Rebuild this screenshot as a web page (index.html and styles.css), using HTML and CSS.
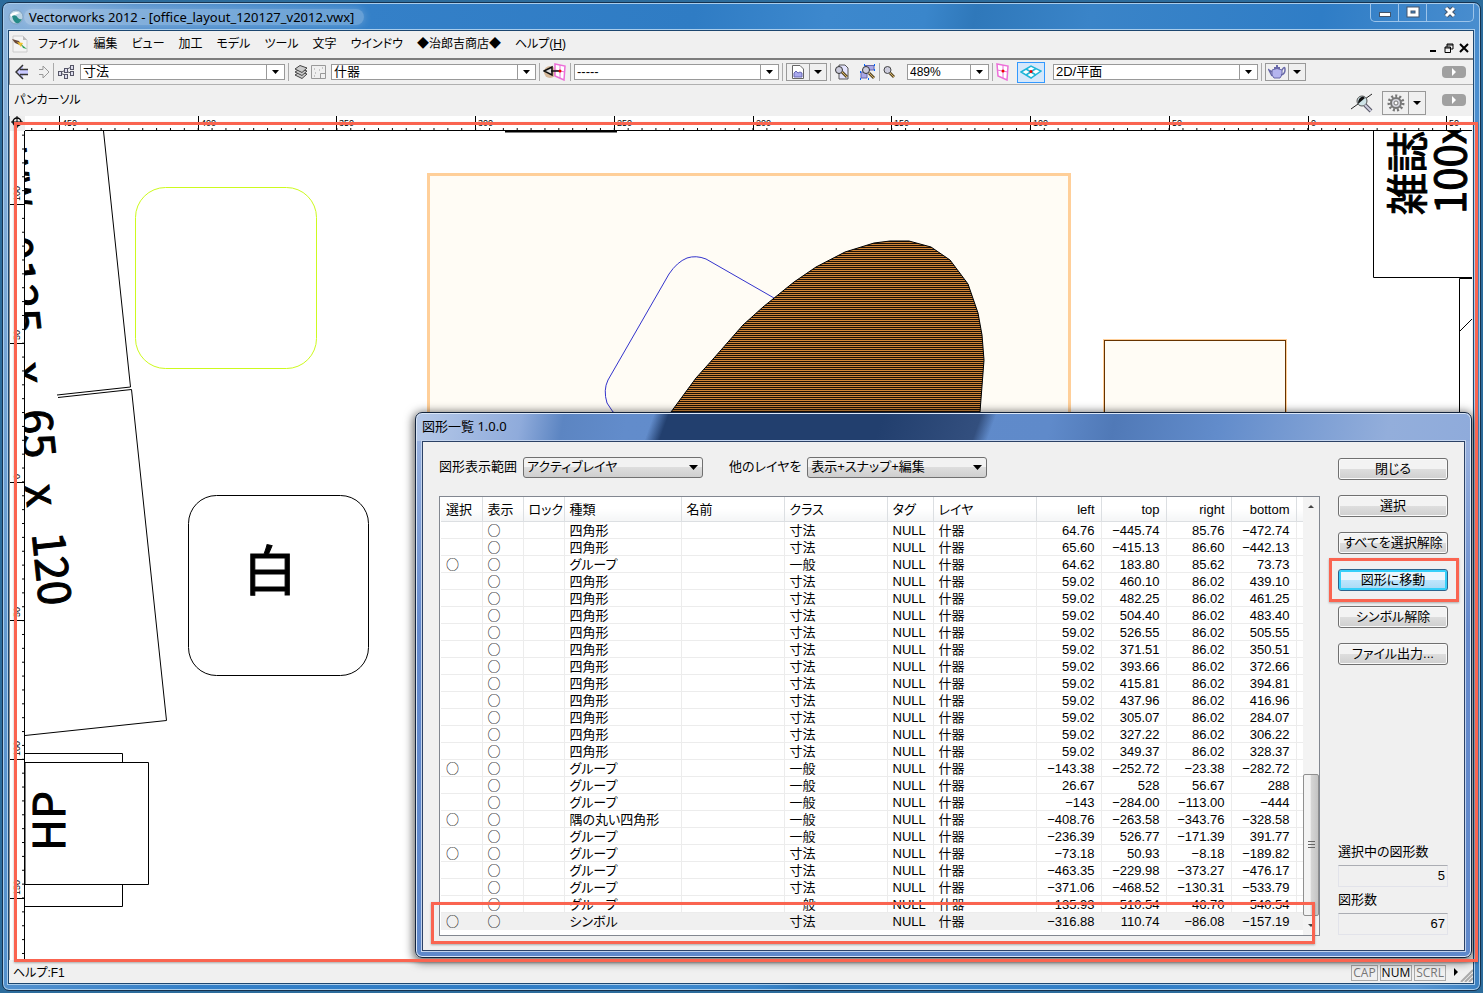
FILE: index.html
```html
<!DOCTYPE html>
<html lang="ja">
<head>
  <meta charset="UTF-8" />
  <meta name="viewport" content="width=device-width, initial-scale=1.0" />
  <title>Vectorworks 2012 - [office_layout_120127_v2012.vwx]</title>
  <link rel="stylesheet" href="styles.css">
</head>
<body>
  <div class="window">
    <header class="titlebar">
      <svg class="app-icon" width="16" height="16" viewBox="0 0 16 16">
        <circle cx="8" cy="8" r="7" fill="#b9d3e4" stroke="#7d9fc0"/>
        <path d="M2 6 Q6 1 12 4 Q7 5 5 9 Z" fill="#fff"/>
        <path d="M4 7 Q8 5 10 9 Q12 11 14 10 Q12 15 8 14 Q5 12 4 7Z" fill="#258a86"/>
      </svg>
      <h1>Vectorworks 2012 - [office_layout_120127_v2012.vwx]</h1>
      <div class="window-buttons">
        <button type="button" aria-label="最小化"><svg width="14" height="12"><rect x="1.5" y="6.5" width="11" height="4" fill="#fff" stroke="#44556b"/></svg></button>
        <button type="button" aria-label="最大化"><svg width="14" height="12"><rect x="3" y="3" width="8" height="6" fill="none" stroke="#44556b" stroke-width="5"/><rect x="3" y="3" width="8" height="6" fill="none" stroke="#fff" stroke-width="3"/></svg></button>
        <button type="button" class="wide" aria-label="閉じる"><svg width="14" height="12"><path d="M3 2L11 10M11 2L3 10" stroke="#44556b" stroke-width="5"/><path d="M3 2L11 10M11 2L3 10" stroke="#fff" stroke-width="3"/></svg></button>
      </div>
    </header>

    <div class="client">
      <nav class="menubar">
        <svg width="17" height="18" viewBox="0 0 17 18">
          <path d="M1 1H11L15 5V17H1Z" fill="#f4f4f4" stroke="#ccc"/>
          <path d="M11 1V5H15" fill="#bbb"/>
          <path d="M0 4L7 6L10 11L3 8Z" fill="#6a4a3a"/>
          <path d="M5 7L11 8L9 12Z" fill="#f4c430"/>
          <path d="M9 9L15 14L11 13Z" fill="#35a35a"/>
        </svg>
        <a href="#">ファイル</a>
        <a href="#">編集</a>
        <a href="#">ビュー</a>
        <a href="#">加工</a>
        <a href="#">モデル</a>
        <a href="#">ツール</a>
        <a href="#">文字</a>
        <a href="#">ウインドウ</a>
        <a href="#">◆治郎吉商店◆</a>
        <a href="#">ヘルプ(<u>H</u>)</a>
        <div class="doc-buttons">
          <button type="button" aria-label="文書を最小化"><svg width="10" height="10"><path d="M1 8H7" stroke="#000" stroke-width="2"/></svg></button>
          <button type="button" aria-label="元に戻す"><svg width="10" height="10"><path d="M3 4V1H9V6H7M3 2H9" fill="none" stroke="#000"/><path d="M1 4H6.5V9.5H1ZM1 5H7" fill="none" stroke="#000"/></svg></button>
          <button type="button" aria-label="文書を閉じる"><svg width="10" height="10"><path d="M1 1L9 9M9 1L1 9" stroke="#000" stroke-width="2"/></svg></button>
        </div>
      </nav>

      <div class="toolbar">
        <button type="button" class="tool" aria-label="戻る"><svg width="14" height="16"><path d="M1 8L8 1V5H13V11H8V15Z" fill="#c9c9ff" stroke="none"/><path d="M8 1L1 8L8 15M5 5.5H13M5 10.5H13" fill="none" stroke="#333" stroke-width="1.5"/></svg></button>
        <button type="button" class="tool" aria-label="進む"><svg width="12" height="16"><path d="M5 2L11 8L5 14V10.5H1M5 2V5.5H1" fill="none" stroke="#999"/></svg></button>
        <span class="sep"></span>
        <button type="button" class="tool" aria-label="クラス"><svg width="18" height="16" fill="none" stroke="#556"><path d="M3 9L14 3M8 7L14 9M3 9L8 11"/><g fill="#dde"><rect x="1.5" y="7.5" width="3" height="4"/><rect x="7.5" y="4.5" width="3" height="4"/><rect x="13.5" y="1.5" width="3" height="4"/><rect x="13.5" y="7.5" width="3" height="4"/><rect x="7.5" y="10.5" width="3" height="4"/></g></svg></button>
        <select class="combo wide" aria-label="アクティブクラス"><option>寸法</option></select>
        <span class="sep"></span>
        <button type="button" class="tool layers" aria-label="レイヤ"><svg width="14" height="16" fill="#ccc" stroke="#444"><path d="M1 11L6 8L13 10L8 14.5Z"/><path d="M1 8L6 5L13 7L8 11.5Z"/><path d="M1 5L6 1.5L13 4L8 8.5Z"/></svg></button>
        <button type="button" class="tool" aria-label="シート"><svg width="15" height="14" fill="none" stroke="#999"><path d="M.5 .5H14.5V13.5H.5Z"/><path d="M14 8.5H9.5V13"/><path d="M3 4H5M8 5H10M4 8H6M11 3H12M3 11H5" stroke-dasharray="1 1"/></svg></button>
        <select class="combo wide" aria-label="アクティブレイヤ"><option>什器</option></select>
        <span class="sep"></span>
        <button type="button" class="tool" aria-label="ビュー"><svg width="24" height="18"><ellipse cx="7" cy="9" rx="6" ry="6" fill="#d6b99a"/><path d="M12 1L22 3L21 17L12 13Z" fill="#fff" stroke="#ec6fd8" stroke-width="1.5"/><path d="M17 2V15M12 7L22 9" stroke="#ec6fd8"/><path d="M1 8L9 4V12Z" fill="#ddd" stroke="#111" stroke-width="1.5"/><path d="M8 8H16" stroke="#111" stroke-width="1.5"/><circle cx="17" cy="8" r="1.5" fill="#e00"/></svg></button>
        <span class="sep"></span>
        <select class="combo wide" aria-label="登録画面"><option>-----</option></select>
        <span class="sep"></span>
        <div class="pair">
          <button type="button" aria-label="シート枠"><svg width="12" height="14"><path d="M.5 .5H8L11.5 4V13.5H.5Z" fill="#fff" stroke="#666"/><path d="M2 12V8L4 6L6 8L8 7L10 8V12Z" fill="#a9a9ee" stroke="#6767b0"/></svg></button>
          <button type="button" class="drop" aria-label="シート枠メニュー"></button>
        </div>
        <span class="sep"></span>
        <button type="button" class="tool" aria-label="用紙全体"><svg width="16" height="16"><path d="M5 1H11L14 4V15H5Z" fill="#e4e4ff" stroke="#555"/><circle cx="5" cy="6" r="3.5" fill="#ccd" stroke="#333"/><path d="M8 8L13 13" stroke="#5b4b28" stroke-width="3"/><path d="M8 8L13 13" stroke="#d8b465"/></svg></button>
        <button type="button" class="tool" aria-label="図形全体"><svg width="17" height="16"><path d="M6 1.5H15V6H6ZM2 8H8V14H2Z" fill="#a9a9e8" stroke="#66a"/><path d="M5 1H6M15 1H16M15 6H16M1 8H2M1 15H2M9 15H10" stroke="#06f" stroke-width="2"/><circle cx="7" cy="6" r="3.5" fill="#ccd" stroke="#333"/><path d="M10 9L15 14" stroke="#5b4b28" stroke-width="3"/><path d="M10 9L15 14" stroke="#d8b465"/></svg></button>
        <span class="sep"></span>
        <button type="button" class="tool" aria-label="ズーム"><svg width="12" height="14"><circle cx="4.5" cy="5" r="3.5" fill="#ccd" stroke="#444"/><path d="M7 8L11 12" stroke="#5b4b28" stroke-width="3"/><path d="M7 8L11 12" stroke="#d8b465"/></svg></button>
        <select class="combo zoom" aria-label="表示倍率"><option>489%</option></select>
        <span class="sep"></span>
        <button type="button" class="tool" aria-label="透視"><svg width="14" height="18"><path d="M1 1L12 3L11 17L2 13Z" fill="#fff" stroke="#ec6fd8" stroke-width="1.5"/><path d="M7 2V15M1 7L12 9" stroke="#ec6fd8"/><circle cx="7" cy="8" r="1.5" fill="#e00"/></svg></button>
        <button type="button" class="tool active" aria-label="平面"><svg width="22" height="14" fill="#fff" stroke="#1fb5d8" stroke-width="1.5"><path d="M1 7L11 1L21 6L11 13Z"/><path d="M6 4L16 10M6 10L16 3.5"/><circle cx="11" cy="6.5" r="1.5" fill="#e00" stroke="none"/></svg></button>
        <select class="combo wide" aria-label="投影"><option>2D/平面</option></select>
        <span class="sep"></span>
        <div class="pair">
          <button type="button" aria-label="レンダリング"><svg width="18" height="16"><path d="M4 6Q9 3 14 6Q15 11 12 14H6Q3 12 4 6Z" fill="#b4b4ee" stroke="#6868a8"/><path d="M4 8L1 6L4 12M14 6Q17 1 17 6Q17 10 13 11" fill="none" stroke="#6868a8" stroke-width="1.5"/><path d="M6 4H12M9 1V3" stroke="#6868a8" stroke-width="2"/></svg></button>
          <button type="button" class="drop" aria-label="レンダリングメニュー"></button>
        </div>
        <button type="button" class="pill" aria-label="ツールバー設定"></button>
      </div>

      <div class="modebar">
        <span>パンカーソル</span>
        <button type="button" class="tool mode-tool" aria-label="スナップ"><svg width="22" height="20"><path d="M0 16L21 1" stroke="#222"/><circle cx="11" cy="8" r="5" fill="#cfe4e8" stroke="#555"/><path d="M7 11L14 5L12 3.5Q7 4 7 11Z" fill="#111"/><path d="M14 12L20 18" stroke="#556" stroke-width="4"/><path d="M14 12L20 18" stroke="#ccd" stroke-width="2"/></svg></button>
        <div class="pair tall">
          <button type="button" aria-label="設定"><svg width="18" height="18"><circle cx="9" cy="9" r="7" fill="none" stroke="#777" stroke-width="3" stroke-dasharray="2 2"/><circle cx="9" cy="9" r="5" fill="#d4d4dc" stroke="#777" stroke-width="2"/><circle cx="9" cy="9" r="2" fill="#fff" stroke="#777"/></svg></button>
          <button type="button" class="drop" aria-label="設定メニュー"></button>
        </div>
        <button type="button" class="pill" aria-label="モード設定"></button>
      </div>

      <div class="workspace">
        <svg class="corner" viewBox="0 0 15 15"><rect width="15" height="15" fill="#eee"/><circle cx="7" cy="6" r="4" fill="none" stroke="#000" stroke-width="1.5"/><path d="M1 6H13M7 0V12" stroke="#000"/></svg>
        <svg class="ruler-top">
          <defs>
            <pattern id="tick-x" x="34" width="13.87" height="14" patternUnits="userSpaceOnUse"><rect y="12" width="1" height="2"/></pattern>
          </defs>
          <rect width="100%" height="14" fill="url(#tick-x)"/>
          <path d="M0 14.5H3000M34.5 0V14M173.5 0V14M311.5 0V14M450.5 0V14M589.5 0V14M728.5 0V14M866.5 0V14M1005.5 0V14M1144.5 0V14M1283.5 0V14M1421.5 0V14" stroke="#000"/>
          <g>
            <text x="37" y="10">450</text><text x="176" y="10">400</text><text x="314" y="10">350</text><text x="453" y="10">300</text><text x="592" y="10">250</text><text x="731" y="10">200</text><text x="869" y="10">150</text><text x="1008" y="10">100</text><text x="1147" y="10">50</text><text x="1286" y="10">0</text><text x="1424" y="10">50</text>
          </g>
        </svg>
        <svg class="ruler-left">
          <defs>
            <pattern id="tick-y" y="73" width="15" height="13.87" patternUnits="userSpaceOnUse"><rect x="12" width="2" height="1"/></pattern>
          </defs>
          <rect width="15" height="100%" fill="url(#tick-y)"/>
          <path d="M14.5 0V3000M0 73.5H14M0 212.5H14M0 351.5H14M0 489.5H14M0 628.5H14M0 767.5H14" stroke="#000"/>
          <g>
            <text transform="translate(10 70) rotate(-90)">100</text><text transform="translate(10 209) rotate(-90)">50</text><text transform="translate(10 348) rotate(-90)">0</text><text transform="translate(10 486) rotate(-90)">50</text><text transform="translate(10 625) rotate(-90)">100</text><text transform="translate(10 764) rotate(-90)">150</text>
          </g>
        </svg>
        <svg class="drawing">
          <defs>
            <pattern id="hatch" width="20" height="20" patternUnits="userSpaceOnUse">
              <rect width="20" height="20" fill="#d08538"/>
              <path d="M0 1.5H20M0 3.5H20M0 5.5H20M0 7.5H20M0 9.5H20M0 11.5H20M0 13.5H20M0 15.5H20M0 17.5H20M0 19.5H20" stroke="#1c1006"/>
            </pattern>
          </defs>
          <!-- desks are drawn in window coordinates -->
          <g transform="translate(-25 -131)" fill="none" stroke="#000">
            <path d="M505 131.5H617" stroke-width="2"/>
            <path d="M103.5 131L130.5 387L57 395M58 397.5L131.5 389.5L166.5 720.5L25 735.5"/>
            <path d="M25 753.5H122.5V906.5H25"/>
            <path d="M25 762.5H148.5V884.5H25Z" fill="#fff"/>
            <rect x="135.5" y="187.5" width="181" height="181" rx="30" stroke="#cdfa1e"/>
            <rect x="188.5" y="495.5" width="180" height="180" rx="28"/>
            <rect x="428.5" y="174.5" width="641" height="500" fill="#fffcf5" stroke="#ffcf99" stroke-width="3"/>
            <path d="M774 298L706 259Q696 255 687 258Q677 262 669 274L608 380Q603 390 607 403L613 412L700 462" stroke="#3333cc"/>
            <path d="M640 470L671 412L696 378L714 358L743 325L763 307L794 282L816 267L845 252L874 243L890 241H909L931 247L950 260L968 284L978 313L982 335L984 360L980 412L960 520Z" fill="url(#hatch)"/>
            <rect x="1104.5" y="340.5" width="181" height="180" stroke="#ffcf99" stroke-width="3"/>
            <rect x="1104.5" y="340.5" width="181" height="180" fill="#fffcf5" stroke="#663300"/>
            <path d="M1373.5 131V277.5H1472M1459.5 600V278.5H1472M1460 331L1472 319"/>
          </g>
          <g class="labels" transform="translate(-25 -131)">
            <text class="small" transform="translate(2 150) rotate(84)">WW</text>
            <text transform="translate(-1 238) rotate(84)">0125</text>
            <text transform="translate(11 364) rotate(84)">x</text>
            <text transform="translate(19 411) rotate(84)">65</text>
            <text transform="translate(25 486) rotate(84)">x</text>
            <text transform="translate(32 534) rotate(84)">120</text>
            <text transform="translate(65 851) rotate(-90)">HP</text>
            <text class="big" x="243" y="591">白</text>
            <text class="shelf" transform="translate(1423 215) rotate(-90)">雑誌</text>
            <text class="shelf" transform="translate(1466 214) rotate(-90)">100x</text>
          </g>
        </svg>
      </div>

      <footer class="statusbar">
        <span>ヘルプ:F1</span>
        <span class="key first">CAP</span>
        <span class="key on">NUM</span>
        <span class="key">SCRL</span>
        <svg width="25" height="18"><path d="M6 4V12L10 8Z"/><path d="M13 18L25 6M17 18L25 10M21 18L25 14" stroke="#aaa" stroke-width="2"/></svg>
      </footer>
    </div>

    <div class="mark mark-canvas"></div>

    <section class="dialog" aria-labelledby="dialog-title">
      <h2 id="dialog-title">図形一覧 1.0.0</h2>
      <div class="dialog-body">
        <div class="list-side">
          <div class="filters">
            <label for="range">図形表示範囲</label>
            <select id="range"><option>アクティブレイヤ</option></select>
            <label for="others" class="second">他のレイヤを</label>
            <select id="others"><option>表示+スナップ+編集</option></select>
          </div>
          <div class="list">
            <table>
              <colgroup>
                <col class="flag"><col class="flag"><col class="flag"><col><col class="name"><col class="name"><col class="tag"><col class="name"><col class="num"><col class="num"><col class="num"><col class="num"><col class="rest">
              </colgroup>
              <thead>
                <tr><th>選択</th><th>表示</th><th>ロック</th><th>種類</th><th>名前</th><th>クラス</th><th>タグ</th><th>レイヤ</th><th>left</th><th>top</th><th>right</th><th>bottom</th><th></th></tr>
              </thead>
              <tbody id="rows"></tbody>
            </table>
            <div class="scrollbar">
              <button type="button" class="up" aria-label="上へ"></button>
              <div class="thumb"></div>
              <button type="button" class="down" aria-label="下へ"></button>
            </div>
            <div class="mark mark-row"></div>
          </div>
        </div>
        <div class="button-side">
          <button type="button">閉じる</button>
          <button type="button">選択</button>
          <button type="button">すべてを選択解除</button>
          <div class="focused">
            <button type="button" class="hot">図形に移動</button>
            <div class="mark mark-button"></div>
          </div>
          <button type="button">シンボル解除</button>
          <button type="button">ファイル出力...</button>
          <div class="counts">
            <label for="selected-count">選択中の図形数</label>
            <input id="selected-count" type="text" value="5" readonly>
            <label for="total-count">図形数</label>
            <input id="total-count" type="text" value="67" readonly>
          </div>
        </div>
      </div>
    </section>
  </div>

  <script>
    // selected, type, class, left, top, right, bottom
    const shapes = [
      [0, '四角形', '寸法', '64.76', '-445.74', '85.76', '-472.74'],
      [0, '四角形', '寸法', '65.60', '-415.13', '86.60', '-442.13'],
      [1, 'グループ', '一般', '64.62', '183.80', '85.62', '73.73'],
      [0, '四角形', '寸法', '59.02', '460.10', '86.02', '439.10'],
      [0, '四角形', '寸法', '59.02', '482.25', '86.02', '461.25'],
      [0, '四角形', '寸法', '59.02', '504.40', '86.02', '483.40'],
      [0, '四角形', '寸法', '59.02', '526.55', '86.02', '505.55'],
      [0, '四角形', '寸法', '59.02', '371.51', '86.02', '350.51'],
      [0, '四角形', '寸法', '59.02', '393.66', '86.02', '372.66'],
      [0, '四角形', '寸法', '59.02', '415.81', '86.02', '394.81'],
      [0, '四角形', '寸法', '59.02', '437.96', '86.02', '416.96'],
      [0, '四角形', '寸法', '59.02', '305.07', '86.02', '284.07'],
      [0, '四角形', '寸法', '59.02', '327.22', '86.02', '306.22'],
      [0, '四角形', '寸法', '59.02', '349.37', '86.02', '328.37'],
      [1, 'グループ', '一般', '-143.38', '-252.72', '-23.38', '-282.72'],
      [0, 'グループ', '一般', '26.67', '528', '56.67', '288'],
      [0, 'グループ', '一般', '-143', '-284.00', '-113.00', '-444'],
      [1, '隅の丸い四角形', '一般', '-408.76', '-263.58', '-343.76', '-328.58'],
      [0, 'グループ', '一般', '-236.39', '526.77', '-171.39', '391.77'],
      [1, 'グループ', '寸法', '-73.18', '50.93', '-8.18', '-189.82'],
      [0, 'グループ', '寸法', '-463.35', '-229.98', '-373.27', '-476.17'],
      [0, 'グループ', '寸法', '-371.06', '-468.52', '-130.31', '-533.79'],
      [0, 'グループ', '一般', '-135.93', '-510.54', '-46.70', '-540.54'],
      [1, 'シンボル', '寸法', '-316.88', '110.74', '-86.08', '-157.19']
    ];
    const rows = document.getElementById('rows');
    shapes.forEach(([selected, type, cls, ...box]) => {
      const cells = [selected ? '○' : '', '○', '', type, '', cls, 'NULL', '什器'];
      box.forEach(n => cells.push(n.replace('-', '−')));
      cells.push('');
      const tr = rows.insertRow();
      cells.forEach(text => tr.insertCell().textContent = text);
    });
    rows.lastElementChild.className = 'current';
  </script>
</body>
</html>
```

FILE: styles.css
```css
* {
  box-sizing: border-box;
}

body {
  margin: 0;
  height: 100vh;
  padding: 2px;
  background: #2c6c9c;
  font-family: "Liberation Sans", "Noto Sans CJK JP", sans-serif;
  font-size: 13px;
  line-height: 16px;
  color: #000;
  overflow: hidden;
}

button, select, input {
  font: inherit;
  color: inherit;
}

a {
  color: inherit;
  text-decoration: none;
}

svg {
  display: block;
  flex: none;
}

.window {
  position: relative;
  height: 100%;
  display: flex;
  flex-direction: column;
  padding: 0 6px 6px 5px;
  border: 1px solid #16324f;
  border-radius: 7px;
  background: linear-gradient(100deg, #8db4dc 0%, #5b95cf 8%, #3480c8 22%, #2f7cc4 42%, #3d88cd 50%, #3a86cb 56%, #2f78ba 59%, #3a84c8 66%, #2f7dc6 80%, #5a98d4 96%, #3b80c0 100%);
  box-shadow: inset 0 0 0 1px #a9cdec;
}

.titlebar {
  display: flex;
  align-items: center;
  height: 27px;
}

h1, h2 {
  margin: 0;
  font-weight: 400;
  font-size: 13px;
  font-family: "Noto Sans", "Noto Sans CJK JP", sans-serif;
}

.titlebar h1 {
  padding: 0 10px 0 5px;
  border-radius: 8px;
  background: rgba(255, 255, 255, 0.25);
  box-shadow: 0 0 8px rgba(255, 255, 255, 0.25);
}

.window-buttons {
  display: flex;
  align-self: flex-start;
  height: 19px;
  margin-left: auto;
  border: 1px solid #9cc4ea;
  border-top: 0;
  border-radius: 0 0 5px 5px;
}

.window-buttons button {
  display: flex;
  align-items: center;
  justify-content: center;
  width: 28px;
  padding: 0;
  border: 0;
  border-right: 1px solid #9cc4ea;
  background: none;
}

.window-buttons .wide {
  width: 46px;
  border-right: 0;
}

.client {
  flex: 1;
  min-height: 0;
  display: flex;
  flex-direction: column;
  border: 1px solid #1c466f;
  outline: 1px solid #a9cdec;
  background: #f0f0f0;
}

.menubar {
  display: flex;
  align-items: center;
  gap: 14px;
  height: 29px;
  padding: 0 4px 2px 3px;
  border-bottom: 2px solid #7d7d7d;
  font-size: 12px;
  font-feature-settings: "palt";
}

.menubar svg + a {
  margin-left: -5px;
}

.doc-buttons {
  display: flex;
  gap: 5px;
  margin-left: auto;
  padding-top: 9px;
}

.doc-buttons button {
  padding: 0;
  border: 0;
  background: none;
}

.toolbar {
  display: flex;
  align-items: center;
  gap: 3px;
  height: 25px;
  padding: 0 7px 0 5px;
  border-left: 1px solid #8a8a8a;
  border-bottom: 1px solid #b0b0b0;
}

.tool {
  flex: none;
  padding: 0;
  border: 0;
  background: none;
}

.toolbar .tool + .tool {
  margin-left: 6px;
}

.tool.layers {
  margin-left: 2px;
}

.toolbar .layers + .tool {
  margin-left: 0;
}

.toolbar .tool.active {
  height: 21px;
  padding: 0 2px;
  margin: 0 3px 0 4px;
  border: 1px solid #3399ff;
  background: #d6e8fb;
}

.sep {
  flex: none;
  width: 1px;
  height: 18px;
  background: #aaa;
}

.combo {
  appearance: none;
  height: 16px;
  padding: 0 2px;
  border: 1px solid #999;
  border-radius: 0;
  line-height: 14px;
  background: #fff url("data:image/svg+xml,%3Csvg xmlns='http://www.w3.org/2000/svg' width='18' height='14'%3E%3Cpath d='M.5 0V14' stroke='%23999'/%3E%3Cpath d='M6 5H13L9.5 9Z'/%3E%3C/svg%3E") right center no-repeat;
}

.tool + .combo {
  margin-left: 2px;
}

.combo.wide {
  width: 205px;
}

.combo.zoom {
  width: 82px;
  margin-left: 9px;
  font-size: 12px;
}

.pair {
  display: flex;
  flex: none;
  height: 18px;
  border: 1px solid #999;
}

.pair button {
  display: flex;
  align-items: center;
  justify-content: center;
  width: 22px;
  padding: 0;
  border: 0;
  background: none;
}

.pair .drop {
  width: 17px;
  border-left: 1px solid #999;
}

.drop::after {
  content: "";
  border: 4px solid transparent;
  border-top-color: #000;
  border-bottom: 0;
}

.pair.tall {
  height: 24px;
}

.tall button {
  width: 25px;
}

.pill {
  flex: none;
  display: flex;
  align-items: center;
  justify-content: center;
  width: 24px;
  height: 12px;
  margin-left: auto;
  padding: 0;
  border: 0;
  border-radius: 4px;
  background: #a0a0a0;
}

.pill::after {
  content: "";
  border: 4px solid transparent;
  border-left-color: #fff;
  border-right: 0;
}

.modebar {
  display: flex;
  align-items: center;
  height: 31px;
  padding: 0 7px 2px 5px;
  font-size: 12px;
  font-feature-settings: "palt";
}

.mode-tool {
  margin: 6px 9px 0 auto;
}

.modebar .pair {
  margin-top: 6px;
}

.modebar .pill {
  margin-left: 16px;
}

.workspace {
  flex: 1;
  min-height: 0;
  display: grid;
  grid-template: 15px minmax(0, 1fr) / 15px minmax(0, 1fr);
  margin: 0 1px 0 0;
  border-left: 1px solid #8a8a8a;
  background: #fff;
}

.workspace svg {
  width: 100%;
  height: 100%;
  overflow: hidden;
}

.ruler-top text,
.ruler-left text {
  font-size: 9px;
}

.labels text {
  font-family: "Noto Sans CJK JP", sans-serif;
  font-size: 44px;
  stroke: #000;
  stroke-width: 1px;
}

.labels .small {
  font-size: 33px;
}

.labels .shelf {
  font-size: 42px;
}

.labels .big {
  font-size: 54px;
}

.statusbar {
  display: flex;
  align-items: center;
  gap: 2px;
  height: 23px;
  padding: 3px 0 0 4px;
  font-size: 12px;
  font-feature-settings: "palt";
}

.key {
  padding: 0 1px;
  border: 1px solid #aaa;
  font-family: "Open Sans", sans-serif;
  line-height: 14px;
  color: #777;
}

.key.first {
  margin-left: auto;
}

.key.on {
  color: #000;
}

.dialog {
  position: absolute;
  top: 409px;
  right: 8px;
  bottom: 32px;
  left: 412px;
  display: flex;
  flex-direction: column;
  padding: 0 6px 6px;
  border: 1px solid #14243c;
  border-radius: 7px;
  background:
    linear-gradient(110deg, transparent 224px, #223f6e 238px, #223f6e 440px, #334f7e 532px, transparent 546px) 0 0 / 100% 28px no-repeat,
    linear-gradient(100deg, #b6c9e8 0%, #8fabdb 10%, #5c85c2 14%, #628ccb 20%, #5f8aca 60%, #5079b7 66%, #628ccb 76%, #93aedb 92%, #8fabdb 100%) 0 0 / 100% 28px no-repeat,
    linear-gradient(#9fb6e0, #6489cc 40%, #5f88ca);
  box-shadow: inset 0 0 0 1px #dbe7f8, 0 2px 10px 2px rgba(0, 0, 0, 0.6);
}

.dialog h2 {
  height: 28px;
  line-height: 26px;
}

.dialog-body {
  flex: 1;
  min-height: 0;
  display: flex;
  gap: 18px;
  padding: 14px 16px 14px;
  border: 1px solid #2c4266;
  outline: 1px solid #c3d4ee;
  background: #f0f0f0;
}

.list-side {
  flex: 1;
  min-width: 0;
  display: flex;
  flex-direction: column;
}

.filters {
  display: flex;
  align-items: center;
  gap: 6px;
  height: 22px;
  margin-bottom: 18px;
  font-feature-settings: "palt";
}

.filters .second {
  margin-left: 20px;
}

.filters select {
  appearance: none;
  width: 180px;
  height: 21px;
  padding: 0 3px;
  border: 1px solid #707070;
  border-radius: 3px;
  background:
    url("data:image/svg+xml,%3Csvg xmlns='http://www.w3.org/2000/svg' width='16' height='8'%3E%3Cpath d='M3 2H12L7.5 7Z'/%3E%3C/svg%3E") right center no-repeat,
    linear-gradient(#f2f2f2 50%, #dddddd 50%, #cfcfcf);
}

.list {
  position: relative;
  flex: 1;
  min-height: 0;
  display: flex;
  align-items: flex-start;
  border: 1px solid #828790;
  background: #fff;
}

table {
  flex: 1;
  min-width: 0;
  width: 100%;
  table-layout: fixed;
  border-collapse: collapse;
  margin-left: 1px;
}

.flag { width: 41px; }
.name { width: 103px; }
.tag { width: 46px; }
.num { width: 65px; }
.rest { width: 7px; }

th, td {
  padding: 0 5px;
  border-right: 1px solid #ececec;
  border-bottom: 1px solid #ececec;
  text-align: left;
  font-weight: 400;
  line-height: 16px;
  white-space: nowrap;
  font-feature-settings: "palt";
}

th {
  height: 24px;
  padding-top: 3px;
  background: linear-gradient(#fff 50%, #f4f5f6);
  border-color: #dcdfe2;
}

td {
  height: 17px;
  padding-top: 2px;
  line-height: 14px;
}

td:nth-child(-n+2) {
  padding-top: 0;
  font-family: "Noto Sans CJK JP", sans-serif;
  font-feature-settings: normal;
}

th:nth-child(n+9), td:nth-child(n+9) {
  text-align: right;
  padding-right: 6px;
}

th:last-child, td:last-child {
  padding: 0;
  border-right: 0;
}

.current td {
  border-color: #f0f0f0;
  background: #f0f0f0;
}

.scrollbar {
  display: flex;
  flex-direction: column;
  align-self: stretch;
  width: 16px;
  background: #f3f3f3;
}

.scrollbar button {
  display: flex;
  align-items: center;
  justify-content: center;
  height: 19px;
  padding: 0;
  border: 0;
  background: none;
}

.scrollbar button::after {
  content: "";
  border: 3px solid transparent;
}

.scrollbar .up::after {
  border-bottom-color: #444;
  border-top: 0;
}

.scrollbar .down::after {
  border-top-color: #444;
  border-bottom: 0;
}

.thumb {
  display: flex;
  align-items: center;
  justify-content: center;
  height: 142px;
  margin-top: auto;
  border: 1px solid #8f8f8f;
  border-radius: 2px;
  background: linear-gradient(90deg, #f3f3f3 45%, #d6d6d6 50%, #c4c4c4);
}

.thumb::after {
  content: "";
  width: 7px;
  height: 8px;
  background: repeating-linear-gradient(#666 0 1px, transparent 1px 3px);
}

.button-side {
  display: flex;
  flex-direction: column;
  gap: 15px;
  width: 110px;
  padding-top: 2px;
}

.button-side button {
  width: 100%;
  height: 22px;
  padding: 0;
  border: 1px solid #707070;
  border-radius: 3px;
  background: linear-gradient(#f3f3f3 50%, #dedede 50%, #cfcfcf);
  box-shadow: inset 0 0 0 1px #fafafa;
  line-height: 18px;
  font-feature-settings: "palt";
}

.focused {
  position: relative;
}

.focused button {
  display: block;
}

.button-side .hot {
  border-color: #2c628b;
  background: linear-gradient(#eaf6fd 50%, #bee6fd 50%, #a7d9f5);
  box-shadow: inset 0 0 0 2px #35d0fa;
}

.counts {
  display: flex;
  flex-direction: column;
  margin: auto 0 1px;
  font-feature-settings: "palt";
}

.counts input {
  width: 100%;
  height: 22px;
  margin: 5px 0;
  padding: 0 2px 2px;
  border: 1px solid #e2e3ea;
  border-top-color: #abadb3;
  background: #f0f0f0;
  text-align: right;
}

.counts input:last-child {
  margin-bottom: 0;
}

/* red callout frames */
.mark {
  position: absolute;
  z-index: 2;
  border: 3px solid #fa6450;
  box-shadow: 0 1px 2px rgba(0, 0, 0, 0.3);
  pointer-events: none;
}

.mark-canvas {
  top: 119px;
  right: 2px;
  bottom: 28px;
  left: 11px;
}

.mark-row {
  right: 4px;
  bottom: -9px;
  left: -9px;
  height: 42px;
}

.mark-button {
  top: -11px;
  right: -11px;
  bottom: -11px;
  left: -9px;
}
```
